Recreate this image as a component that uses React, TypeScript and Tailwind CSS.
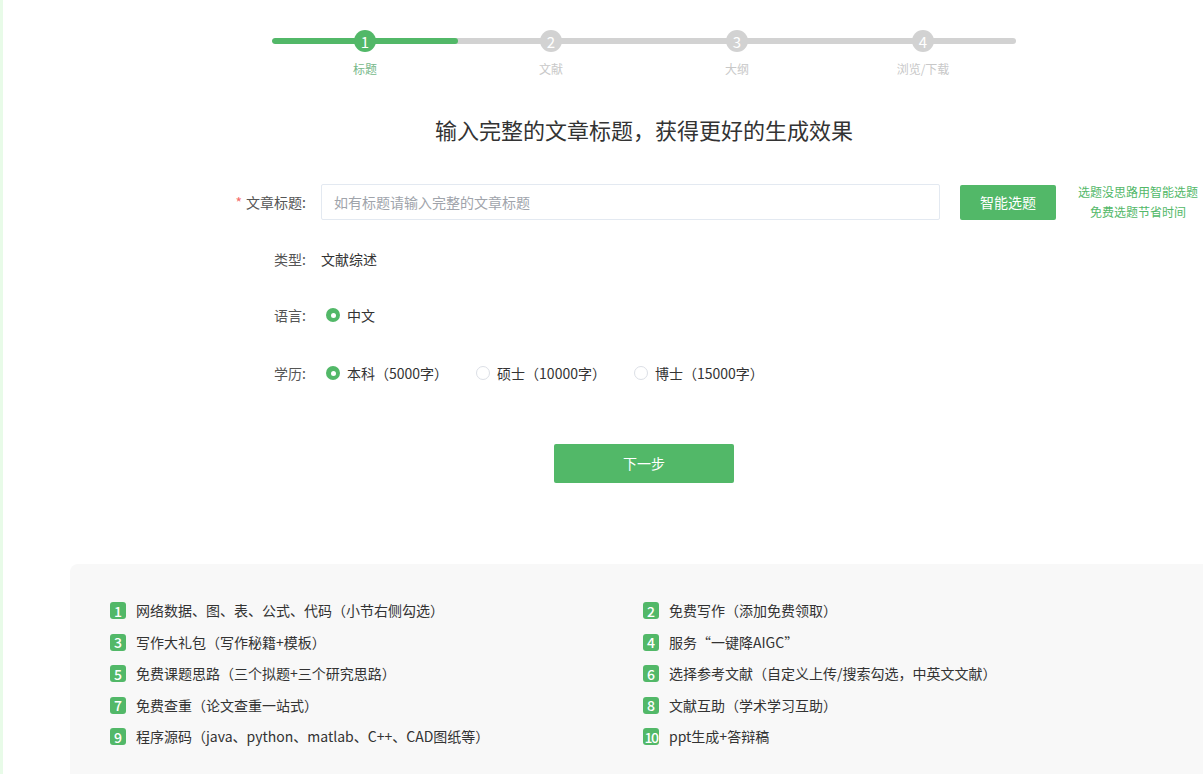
import { useState } from "react";

const steps = ["标题", "文献", "大纲", "浏览/下载"];

const perks = [
  "网络数据、图、表、公式、代码（小节右侧勾选）",
  "免费写作（添加免费领取）",
  "写作大礼包（写作秘籍+模板）",
  "服务“一键降AIGC”",
  "免费课题思路（三个拟题+三个研究思路）",
  "选择参考文献（自定义上传/搜索勾选，中英文文献）",
  "免费查重（论文查重一站式）",
  "文献互助（学术学习互助）",
  "程序源码（java、python、matlab、C++、CAD图纸等）",
  "ppt生成+答辩稿",
];

const degrees = ["本科（5000字）", "硕士（10000字）", "博士（15000字）"];

function Radio({ checked }: { checked: boolean }) {
  return checked ? (
    <span className="flex h-[14px] w-[14px] items-center justify-center rounded-full bg-[#52b868]">
      <span className="h-[5px] w-[5px] rounded-full bg-white" />
    </span>
  ) : (
    <span className="h-[14px] w-[14px] rounded-full border border-[#dcdfe6] bg-white" />
  );
}

export default function App() {
  const [title, setTitle] = useState("");
  const [degree, setDegree] = useState(0);

  return (
    <div className="h-[774px] w-full overflow-hidden border-l-[3px] border-[#e8fbe8] bg-white font-['Noto_Sans_CJK_SC',sans-serif] text-[#333]">
      <div className="flex flex-col items-center pl-[82px]">
        {/* stepper */}
        <div className="w-[744px] pt-[30px]">
          <div className="relative h-[22px]">
            <div className="absolute inset-x-0 top-[8px] flex h-[6px] overflow-hidden rounded-full bg-[#d2d2d2]">
              <div className="w-[186px] rounded-full bg-[#52b868]" />
            </div>
            <div className="relative grid grid-cols-4">
              {steps.map((s, i) => (
                <div key={s} className="flex justify-center">
                  <span
                    className={`flex h-[22px] w-[22px] items-center justify-center rounded-full text-[15px] leading-none text-white ${
                      i === 0 ? "bg-[#52b868]" : "bg-[#d2d2d2]"
                    }`}
                  >
                    {i + 1}
                  </span>
                </div>
              ))}
            </div>
          </div>
          <div className="mt-[9px] grid grid-cols-4">
            {steps.map((s, i) => (
              <p
                key={s}
                className={`text-center text-[12px] leading-4 ${
                  i === 0 ? "text-[#76b889]" : "text-[#c8c8c8]"
                }`}
              >
                {s}
              </p>
            ))}
          </div>
        </div>

        <h2 className="mt-[36px] text-[22px] leading-8 text-[#333]">
          输入完整的文章标题，获得更好的生成效果
        </h2>
      </div>

      {/* form */}
      <div className="ml-[217px] mt-[37px] text-[14px]">
        <div className="flex items-center">
          <label className="w-[86px] text-right text-[#555]">
            <span className="mr-[4px] text-[#f56c6c]">*</span>文章标题:
          </label>
          <input
            value={title}
            onChange={(e) => setTitle(e.target.value)}
            placeholder="如有标题请输入完整的文章标题"
            className="ml-[15px] h-[36px] w-[619px] rounded-[2px] border border-[#e3e9f1] px-[12px] text-[14px] outline-none placeholder:text-[#a0a4ab]"
          />
          <button className="ml-[20px] h-[35px] w-[96px] rounded-[2px] bg-[#52b868] text-[14px] text-white">
            智能选题
          </button>
          <div className="ml-[21px] w-[122px] text-center text-[12px] leading-5 text-[#52b868]">
            <p>选题没思路用智能选题</p>
            <p>免费选题节省时间</p>
          </div>
        </div>

        <div className="mt-[19px] flex h-[36px] items-center">
          <span className="w-[86px] text-right text-[#555]">类型:</span>
          <span className="ml-[15px]">文献综述</span>
        </div>

        <div className="mt-[20px] flex h-[36px] items-center">
          <span className="w-[86px] text-right text-[#555]">语言:</span>
          <label className="ml-[20px] flex items-center gap-[7px]">
            <Radio checked />
            中文
          </label>
        </div>

        <div className="mt-[22px] flex h-[36px] items-center">
          <span className="w-[86px] text-right text-[#555]">学历:</span>
          <div className="ml-[20px] flex items-center gap-[28px]">
            {degrees.map((d, i) => (
              <label
                key={d}
                onClick={() => setDegree(i)}
                className="flex cursor-pointer items-center gap-[7px]"
              >
                <Radio checked={degree === i} />
                {d}
              </label>
            ))}
          </div>
        </div>
      </div>

      <div className="flex justify-center pl-[82px]">
        <button className="mt-[53px] h-[39px] w-[180px] rounded-[2px] bg-[#52b868] text-[14px] text-white">
          下一步
        </button>
      </div>

      {/* perks */}
      <div className="ml-[67px] mt-[81px] h-[300px] rounded-tl-[8px] bg-[#f8f8f8] pl-[40px] pt-[31px]">
        <ul className="grid grid-cols-[533px_1fr] text-[14px]">
          {perks.map((p, i) => (
            <li key={p} className="flex h-[31.5px] items-center">
              <span
                className={`flex h-[17px] w-[16px] shrink-0 items-center justify-center rounded-[3px] bg-[#52b868] text-[14px] font-medium leading-none text-white ${
                  i === 9 ? "tracking-[-1.5px]" : ""
                }`}
              >
                {i + 1}
              </span>
              <span className="ml-[10px] text-[#333]">{p}</span>
            </li>
          ))}
        </ul>
      </div>
    </div>
  );
}
